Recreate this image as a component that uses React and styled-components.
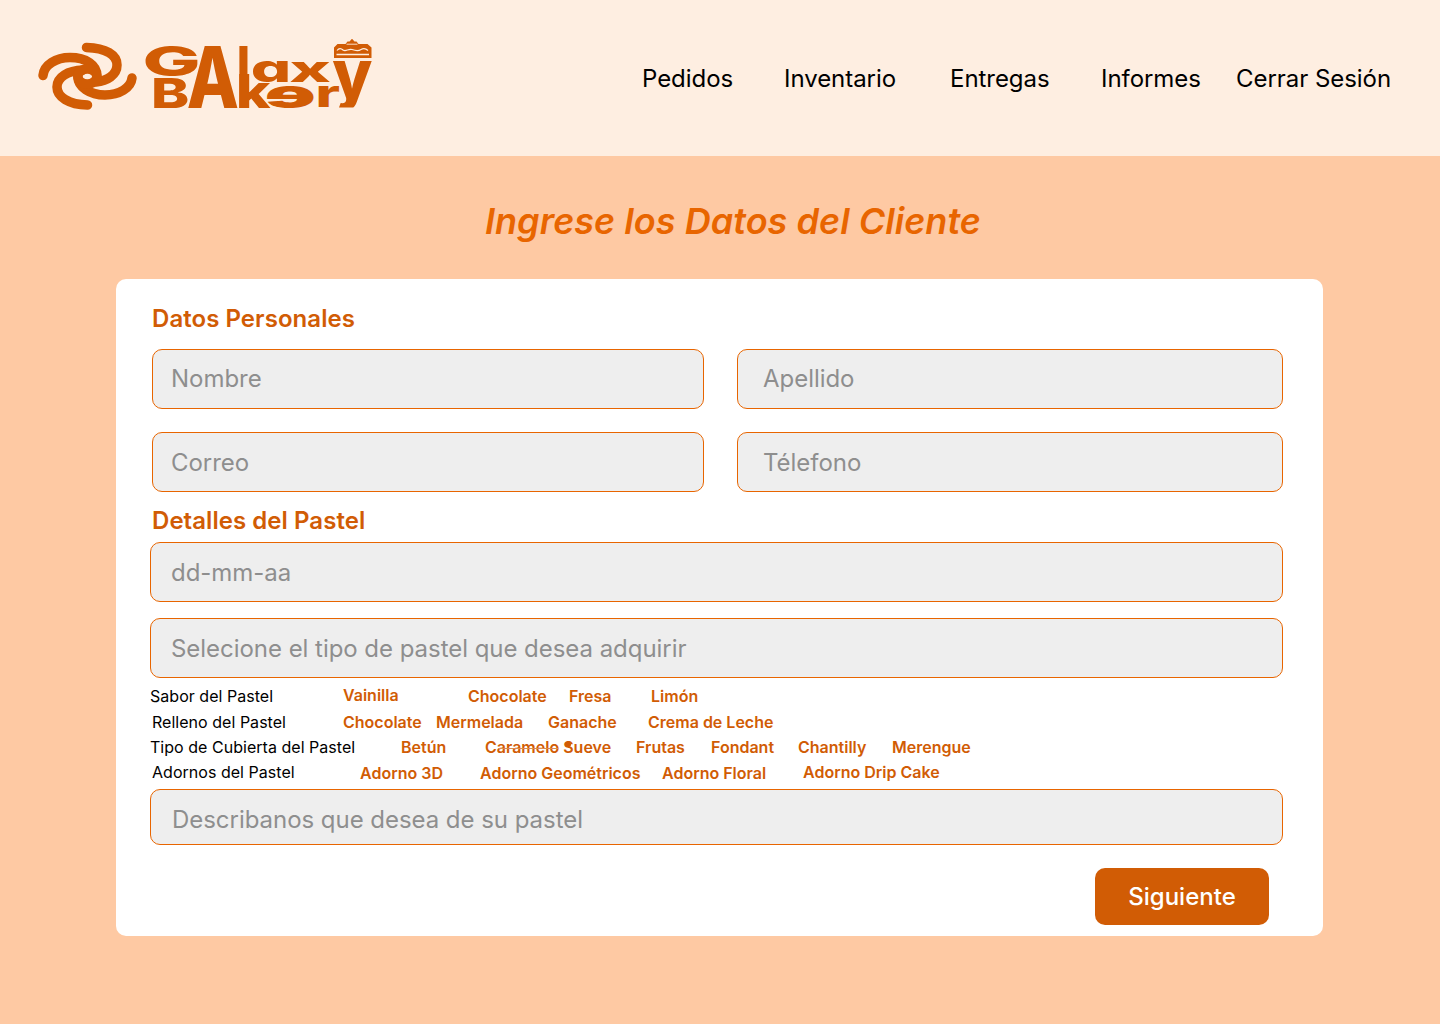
import React from 'react';
import styled, { createGlobalStyle } from 'styled-components';

const Global = createGlobalStyle`
  *, *::before, *::after { box-sizing: border-box; }
  body { margin: 0; background: #fec9a3; font-family: Inter, "Liberation Sans", sans-serif; }
`;

const Page = styled.div`
  min-height: 1024px;
  background: #fec9a3;
`;

const Header = styled.header`
  height: 156px;
  padding: 0 50px 0 30px;
  background: #feeee1;
  display: flex;
  align-items: center;
  justify-content: space-between;
`;

const Nav = styled.nav`
  display: grid;
  grid-template-columns: 142px 166px 151px 135px 154px;
`;

const NavLink = styled.a`
  color: #000;
  font-size: 24px;
  line-height: 29px;
  letter-spacing: -0.05px;
  white-space: nowrap;
`;

const Title = styled.h1`
  margin: 0;
  padding: 43px 0 0 485px;
  font-size: 36px;
  line-height: 44px;
  letter-spacing: 0.04px;
  font-weight: 600;
  font-style: italic;
  color: #e86500;
`;

const Card = styled.form`
  width: 1207px;
  height: 657px;
  margin: 36px 0 0 116px;
  padding: 25px 40px 0 34px;
  border-radius: 10px;
  background: #fff;
`;

const SectionTitle = styled.h2`
  margin: 0 0 0 2px;
  font-size: 24px;
  line-height: 29px;
  letter-spacing: 0.05px;
  font-weight: 600;
  color: #d15c05;
`;

const FieldGrid = styled.div`
  display: grid;
  grid-template-columns: 552px 546px;
  gap: 23px 33px;
  margin: 16px 0 14px 2px;
`;

const Input = styled.input`
  display: block;
  width: 100%;
  height: ${(p) => p.$height || 60}px;
  margin: 0 0 ${(p) => p.$gap || 0}px;
  padding: ${(p) => p.$lower || 0}px 20px ${(p) => p.$raise || 0}px ${(p) => p.$inset}px;
  border: 1px solid #e86500;
  border-radius: 10px;
  outline: none;
  background: #eeeeee;
  font: 400 24px Inter, "Liberation Sans", sans-serif;
  letter-spacing: -0.04px;
  &::placeholder { color: #8e8e8e; opacity: 1; }
`;

const Details = styled.div`
  margin-top: 7px;
`;

const OptionRow = styled.div`
  display: grid;
  grid-template-columns: ${(p) => p.$columns};
  height: ${(p) => p.$height}px;
  padding-left: ${(p) => p.$inset || 0}px;
  font-size: 16px;
  line-height: 19px;
  white-space: nowrap;
`;

const OptionLabel = styled.span`
  color: #000;
  letter-spacing: 0.03px;
  padding-top: ${(p) => p.$drop || 0}px;
`;

const Option = styled.span`
  font-weight: 600;
  color: #d15c05;
  padding-top: ${(p) => p.$drop || 0}px;
`;

const MarkedOption = styled(Option)`
  position: relative;
  &::before {
    content: '';
    position: absolute;
    left: 13px;
    top: 10px;
    width: 60px;
    height: 1px;
    background: #dd8b50;
  }
  &::after {
    content: '';
    position: absolute;
    left: 80px;
    top: 4px;
    width: 6px;
    height: 5px;
    border-radius: 2px;
    background: #d15c05;
  }
`;

const Actions = styled.div`
  display: flex;
  justify-content: flex-end;
  padding: 23px 14px 0 0;
`;

const NextButton = styled.button`
  width: 174px;
  height: 57px;
  padding: 0;
  border: 0;
  border-radius: 10px;
  background: #d15c05;
  color: #fff;
  font: 500 24px Inter, "Liberation Sans", sans-serif;
`;

const LogoArt = styled.svg`
  display: block;
  margin-bottom: 6px;
  fill: #d15c05;
`;

const Letter = styled.text`
  font-family: Inter, sans-serif;
  font-size: 100px;
  font-feature-settings: 'cv11';
`;

const ctx = document.createElement('canvas').getContext('2d');

// Stretches one letter to fill the box x..x2, y..y2.
function Glyph({ ch, x, y, x2, y2, weight = 800, mirror, clip }) {
  ctx.font = `${weight} 100px Inter, sans-serif`;
  const m = ctx.measureText(ch);
  const sx = (x2 - x) / (m.actualBoundingBoxRight + m.actualBoundingBoxLeft);
  const sy = (y2 - y) / (m.actualBoundingBoxAscent + m.actualBoundingBoxDescent);
  const tx = mirror ? x2 - m.actualBoundingBoxLeft * sx : x + m.actualBoundingBoxLeft * sx;
  const ty = y + m.actualBoundingBoxAscent * sy;
  return (
    <g clipPath={clip}>
      <Letter transform={`translate(${tx} ${ty}) scale(${mirror ? -sx : sx} ${sy})`} fontWeight={weight}>
        {ch}
      </Letter>
    </g>
  );
}

function Logo() {
  return (
    <LogoArt width="350" height="90" viewBox="30 30 350 90" role="img" aria-label="Galaxy Bakery">
      <clipPath id="tail">
        <path d="M330 58H375V107.500H339L344 94L330 94Z" />
      </clipPath>
      <g fill="none" stroke="#d15c05" strokeWidth="9.500" strokeLinecap="round">
        <path d="M43 75.500C44 65 56 57.500 70 57.500C86 57.500 97 65 97 76" />
        <path d="M86.500 47.500C106 48 117 55 117 65C117 75 107 81 96 82" />
        <path d="M132 78C131 88 119 95 105 95C90 95 78 87 78 77" />
        <path d="M87.500 105C69 104.500 57 97 57 87C57 77 68 70.500 83 70" />
        <ellipse cx="87.300" cy="76.500" rx="9.500" ry="7.500" />
      </g>
      <Glyph ch="G" x={145.7} y={45.5} x2={197.5} y2={76.5} />
      <Glyph ch="B" x={154} y={78} x2={188} y2={108} />
      <Glyph ch="A" x={188} y={46} x2={237.5} y2={108} />
      <Glyph ch="l" x={239} y={46} x2={247.5} y2={108} />
      <Glyph ch="k" x={239} y={74} x2={271} y2={108} />
      <Glyph ch="a" x={252} y={61} x2={285} y2={82} />
      <Glyph ch="x" x={290} y={61.5} x2={330} y2={82} />
      <Glyph ch="e" x={267} y={85.5} x2={313.5} y2={108} weight={900} mirror />
      <Glyph ch="r" x={318.5} y={86} x2={339.5} y2={107} />
      <Glyph ch="y" x={333} y={60.5} x2={372} y2={112} clip="url(#tail)" />
      <path d="M334 58V47.500L337.500 44H345.500L347.500 41.500H349.500L352 38.800L354.500 41.500H356.500L358.500 44H367.500L371.500 47.500V58Z" />
      <g fill="none" stroke="#feeee1">
        <path d="M336.500 54.500H369" strokeWidth="1.300" />
        <path d="M337 50.500C339 48 341 48 343 50C346 52 348 48.500 352 49.500C356 51 359 51 361 49.500C364 47.500 366 48.500 368 50.500" strokeWidth="1.200" />
        <path d="M346.500 44.200H357.500" strokeWidth="0.900" />
      </g>
    </LogoArt>
  );
}

export default function App() {
  return (
    <Page>
      <Global />
      <Header>
        <Logo />
        <Nav>
          {['Pedidos', 'Inventario', 'Entregas', 'Informes', 'Cerrar Sesión'].map((t) => (
            <NavLink key={t}>{t}</NavLink>
          ))}
        </Nav>
      </Header>
      <Title>Ingrese los Datos del Cliente</Title>
      <Card>
        <SectionTitle>Datos Personales</SectionTitle>
        <FieldGrid>
          <Input $inset={18} $raise={2} placeholder="Nombre" />
          <Input $inset={25} $raise={2} placeholder="Apellido" />
          <Input $inset={18} placeholder="Correo" />
          <Input $inset={25} placeholder="Télefono" />
        </FieldGrid>
        <SectionTitle>Detalles del Pastel</SectionTitle>
        <Details>
          <Input $inset={20} $gap={16} placeholder="dd-mm-aa" />
          <Input $inset={20} $gap={8} placeholder="Selecione el tipo de pastel que desea adquirir" />
          <OptionRow $height={27} $columns="193px 125px 101px 82px auto">
            <OptionLabel $drop={1}>Sabor del Pastel</OptionLabel>
            <Option>Vainilla</Option>
            <Option $drop={1}>Chocolate</Option>
            <Option $drop={1}>Fresa</Option>
            <Option $drop={1}>Limón</Option>
          </OptionRow>
          <OptionRow $height={25} $inset={2} $columns="191px 93px 112px 100px auto">
            <OptionLabel>Relleno del Pastel</OptionLabel>
            <Option>Chocolate</Option>
            <Option>Mermelada</Option>
            <Option>Ganache</Option>
            <Option>Crema de Leche</Option>
          </OptionRow>
          <OptionRow $height={25} $columns="251px 84px 151px 75px 87px 94px auto">
            <OptionLabel>Tipo de Cubierta del Pastel</OptionLabel>
            <Option>Betún</Option>
            <MarkedOption>Caramelo Sueve</MarkedOption>
            <Option>Frutas</Option>
            <Option>Fondant</Option>
            <Option>Chantilly</Option>
            <Option>Merengue</Option>
          </OptionRow>
          <OptionRow $height={26} $inset={2} $columns="208px 120px 182px 141px auto">
            <OptionLabel>Adornos del Pastel</OptionLabel>
            <Option $drop={1}>Adorno 3D</Option>
            <Option $drop={1}>Adorno Geométricos</Option>
            <Option $drop={1}>Adorno Floral</Option>
            <Option>Adorno Drip Cake</Option>
          </OptionRow>
          <Input $inset={21} $height={56} $lower={5} placeholder="Describanos que desea de su pastel" />
        </Details>
        <Actions>
          <NextButton type="button">Siguiente</NextButton>
        </Actions>
      </Card>
    </Page>
  );
}
